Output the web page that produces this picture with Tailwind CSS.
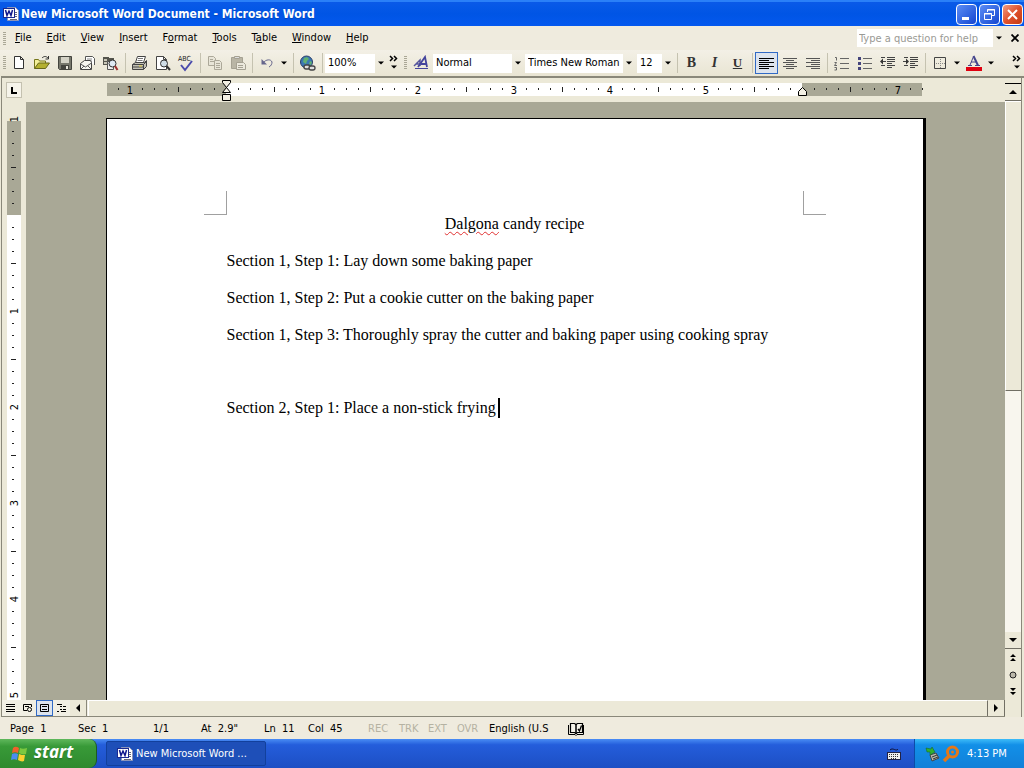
<!DOCTYPE html>
<html lang="en">
<head>
<meta charset="utf-8">
<title>New Microsoft Word Document - Microsoft Word</title>
<script src="https://cdn.jsdelivr.net/npm/@tailwindcss/browser@4"></script>
</head>
<body class="h-screen flex flex-col overflow-hidden bg-[#ece9d8] text-black text-[11px] leading-4 font-['DejaVu_Sans_Condensed','Noto_Sans',sans-serif]">

<svg width="0" height="0" class="absolute" aria-hidden="true">
  <symbol id="word" viewBox="0 0 16 16">
    <path d="M4.500 1.500h8l3 3v10h-11z" fill="#fff" stroke="#8c94b8"/>
    <path d="M12 6.500h2M12 8.500h2M12 10.500h2M7 13.500h7" stroke="#667" fill="none"/>
    <rect x="0.500" y="2.500" width="11" height="9" fill="#fff" stroke="#1a2a90"/>
    <path d="M2.500 4l1.500 5.500 2-4.500 2 4.500L9.500 4" fill="none" stroke="#10188c" stroke-width="1.500"/>
  </symbol>
  <symbol id="down" viewBox="0 0 6 4"><path d="M0 0.500h6l-3 3z"/></symbol>
  <symbol id="more" viewBox="0 0 10 16">
    <path d="M1 1l2.500 2.500L1 6M5 1l2.500 2.500L5 6" fill="none" stroke="#000" stroke-width="1.500"/>
    <path d="M2 10.500h6l-3 3z"/>
  </symbol>
</svg>

<header class="h-[26px] shrink-0 flex items-center bg-linear-to-b from-[#0a5ae8] via-[#0055e5] to-[#0458ee] border-t-2 border-[#2a80f8] pl-[3px] pr-px text-white">
  <svg class="size-4 mr-0.5"><use href="#word"/></svg>
  <h1 class="flex-1 text-[12px] font-bold text-shadow-xs">New Microsoft Word Document - Microsoft Word</h1>
  <div class="flex gap-0.5">
    <button aria-label="Minimize" class="w-[21px] h-[21px] rounded-sm border border-white bg-linear-to-br from-[#5c8df5] to-[#1544d0] flex items-center justify-center"><svg width="15" height="15"><path d="M3 10h7v3H3z" fill="#fff"/></svg></button>
    <button aria-label="Restore" class="w-[21px] h-[21px] rounded-sm border border-white bg-linear-to-br from-[#5c8df5] to-[#1544d0] flex items-center justify-center"><svg width="15" height="15" fill="none" stroke="#fff"><path d="M5.500 5V2.500h7v6H10M5 3h8" /><path d="M2.500 6.500h7v6h-7zM2 7h8"/></svg></button>
    <button aria-label="Close" class="w-[21px] h-[21px] rounded-sm border border-white bg-linear-to-br from-[#f09a80] via-[#e0512c] to-[#c33a10] flex items-center justify-center"><svg width="15" height="15"><path d="M3 3l9 9M12 3l-9 9" stroke="#fff" stroke-width="2"/></svg></button>
  </div>
</header>

<nav class="h-6 shrink-0 flex items-center pl-[3px] bg-[#efebde]">
  <svg width="4" height="14" class="mr-2"><path d="M1.500 1v13" stroke="#aaa796" stroke-width="3" stroke-dasharray="1 1"/></svg>
  <div class="flex gap-[15px]">
    <button><u>F</u>ile</button><button><u>E</u>dit</button><button><u>V</u>iew</button><button><u>I</u>nsert</button><button>F<u>o</u>rmat</button><button><u>T</u>ools</button><button>T<u>a</u>ble</button><button><u>W</u>indow</button><button><u>H</u>elp</button>
  </div>
  <div class="flex-1"></div>
  <input type="text" aria-label="Type a question for help" placeholder="Type a question for help" class="w-[136px] h-[18px] bg-white px-0.5 placeholder:text-[#9a9a94]">
  <button aria-label="Recent questions" class="w-3 flex justify-center"><svg width="6" height="4"><use href="#down"/></svg></button>
  <button aria-label="Close document" class="w-[19px] flex justify-center"><svg width="8" height="8"><path d="M0.500 0.500l7 7M7.500 0.500l-7 7" stroke="#000" stroke-width="1.800"/></svg></button>
</nav>

<div class="h-[26px] shrink-0 flex items-center pl-[3px] bg-linear-to-b from-[#f3f0e6] to-[#e9e5d3] whitespace-nowrap">
  <svg width="4" height="16" class="shrink-0"><path d="M1.500 1v14" stroke="#aaa796" stroke-width="3" stroke-dasharray="1 1"/></svg>
  <button aria-label="New" class="w-[23px] flex justify-center shrink-0"><svg width="16" height="16"><path d="M3.500 1.500h6l3 3v9h-9zM9.500 1.500v3h3" fill="#fff" stroke="#333"/></svg></button>
  <button aria-label="Open" class="w-[23px] flex justify-center shrink-0"><svg width="18" height="16"><path d="M1.500 13.500v-9h4l1 1.500h6v3" fill="#f4f09a" stroke="#76761c"/><path d="M1.500 13.500l4-5.500h11l-4 5.500z" fill="#b4b030" stroke="#66661a"/><path d="M9 3c2-2 4-2 6 0M15.500 1v3h-3" fill="none" stroke="#333"/></svg></button>
  <button aria-label="Save" class="w-[23px] flex justify-center shrink-0"><svg width="16" height="16"><path d="M1.500 1.500h13v13h-12l-1-1z" fill="#77776c" stroke="#44443e"/><path d="M4 2h8v6H4z" fill="#d4d2c6"/><path d="M4 10h8v4H4z" fill="#44443e"/><path d="M9 11h2v3H9z" fill="#e8e6dc"/></svg></button>
  <button aria-label="E-mail" class="w-[23px] flex justify-center shrink-0"><svg width="17" height="16"><path d="M6.500 6V1.500h7l2 2V10" fill="#fff" stroke="#555"/><path d="M8 4h5M8 6h5" stroke="#888"/><path d="M1.500 14.500v-6l4-3h6l1 2v7z" fill="#f6f6f0" stroke="#444"/><path d="M1.500 9l5 3 6-4M2 14l3-3M12 14l-3-3" fill="none" stroke="#555"/></svg></button>
  <button aria-label="Search" class="w-[23px] flex justify-center shrink-0"><svg width="17" height="16"><path d="M1 2h6v1h5v7H1z" fill="#55554e"/><path d="M2 4h3v2H2zM2 7h3v2H2z" fill="#c8c6b8"/><path d="M5.500 6.500h6v8h-6z" fill="#eee" stroke="#555"/><circle cx="10.500" cy="8.500" r="3.500" fill="#dfeaf4" stroke="#333"/><path d="M13 11l2.500 4" stroke="#9c3030" stroke-width="2"/></svg></button>
  <div class="w-1.5 h-5 shrink-0 flex justify-center"><div class="w-px bg-[#c5c2b0]"></div></div>
  <button aria-label="Print" class="w-[23px] flex justify-center shrink-0"><svg width="17" height="16"><path d="M4.500 7.500l2-6h8l-2 6z" fill="#fff" stroke="#444"/><path d="M7 3.500h5M6.500 5.500h5" stroke="#777"/><path d="M1.500 9.500l3-2h9l2-2v6l-3 3h-11z" fill="#c4c2b6" stroke="#444"/><path d="M1.500 9.500h11l3-3M12.500 9.500v5M2 12h10" fill="none" stroke="#444"/><path d="M8 11h3" stroke="#e8d840"/></svg></button>
  <button aria-label="Print Preview" class="w-[23px] flex justify-center shrink-0"><svg width="17" height="16"><path d="M2.500 1.500h7l3 3v10h-10zM9.500 1.500v3h3" fill="#fff" stroke="#444"/><circle cx="10" cy="8.500" r="3.500" fill="#cfdde6" stroke="#333"/><path d="M12.500 11l3.500 4" stroke="#333" stroke-width="2"/></svg></button>
  <button aria-label="Spelling" class="w-[23px] flex justify-center shrink-0"><svg width="18" height="18"><text x="1" y="7" font-size="7" fill="#222">ABC</text><path d="M4 11l4 5 7-9" fill="none" stroke="#4b4bac" stroke-width="2"/></svg></button>
  <div class="w-1.5 h-5 shrink-0 flex justify-center"><div class="w-px bg-[#c5c2b0]"></div></div>
  <button aria-label="Copy" class="w-[23px] flex justify-center shrink-0"><svg width="16" height="16" fill="#e8e5d8" stroke="#aca899"><path d="M1.500 1.500h5l2 2v7h-7z"/><path d="M3 4.500h3M3 6.500h4"/><path d="M7.500 5.500h5l2 2v7h-7z"/><path d="M9 8.500h4M9 10.500h4M9 12.500h4"/></svg></button>
  <button aria-label="Paste" class="w-[23px] flex justify-center shrink-0"><svg width="16" height="16" fill="#b9b5a5" stroke="#a5a192"><path d="M1.500 2.500h11v11h-11z"/><path d="M4.500 1.500h5v2h-5z" fill="#ddd"/><path d="M6.500 7.500h7l2 2v5h-9z" fill="#ebe8dc"/><path d="M8 10.500h5M8 12.500h5"/></svg></button>
  <div class="w-1.5 h-5 shrink-0 flex justify-center"><div class="w-px bg-[#c5c2b0]"></div></div>
  <button aria-label="Undo" class="w-[23px] flex justify-center shrink-0"><svg width="16" height="16"><path d="M4 8c3-4 8-4 9-1 0 2-1 4-3 5" fill="none" stroke="#66668c"/><path d="M2.500 4v5.500h5.500z" fill="#66668c"/></svg></button>
  <button aria-label="Undo list" class="w-3 flex justify-center shrink-0"><svg width="6" height="4"><use href="#down"/></svg></button>
  <div class="w-1.5 h-5 shrink-0 flex justify-center"><div class="w-px bg-[#c5c2b0]"></div></div>
  <button aria-label="Insert Hyperlink" class="w-[23px] flex justify-center shrink-0"><svg width="18" height="17"><circle cx="7.500" cy="7" r="6" fill="#3a78b4" stroke="#2a3c68"/><path d="M5 3l3-1 2 2-2 2-1 3-3-2zM11 6l2 1-1 3-2-1z" fill="#62b070"/><g fill="none" stroke="#444" stroke-width="1.300"><rect x="5" y="10" width="6" height="4" rx="2" fill="#ddd"/><rect x="10" y="11" width="6" height="4" rx="2" fill="#ddd"/></g></svg></button>
  <div class="w-1.5 h-5 shrink-0 flex justify-center"><div class="w-px bg-[#c5c2b0]"></div></div>
  <select aria-label="Zoom" class="appearance-none w-[50px] h-[19px] bg-white pl-[3px] shrink-0"><option>100%</option></select>
  <svg width="6" height="4" class="mx-[3px] shrink-0"><use href="#down"/></svg>
  <button aria-label="More standard buttons" class="w-3.5 flex justify-center shrink-0"><svg width="10" height="16"><use href="#more"/></svg></button>
  <svg width="9" height="16" class="shrink-0"><path d="M4.500 1v14" stroke="#aaa796" stroke-width="3" stroke-dasharray="1 1"/></svg>
  <button aria-label="Styles and Formatting" class="w-[23px] flex justify-center shrink-0"><svg width="17" height="16"><path d="M1 11l6-6v6M3 9h4" fill="none" stroke="#55559c" stroke-width="1.500"/><path d="M5 12l7-10 2 10M8 9h5" fill="none" stroke="#44449c" stroke-width="1.800"/><path d="M2 13.500h13" stroke="#44449c"/></svg></button>
  <select aria-label="Style" class="appearance-none w-[79px] h-[19px] bg-white pl-[3px] shrink-0"><option>Normal</option></select>
  <svg width="6" height="4" class="mx-[3px] shrink-0"><use href="#down"/></svg>
  <select aria-label="Font" class="appearance-none w-[98px] h-[19px] bg-white pl-[3px] ml-px shrink-0"><option>Times New Roman</option></select>
  <svg width="6" height="4" class="mx-[3px] shrink-0"><use href="#down"/></svg>
  <select aria-label="Font size" class="appearance-none w-[25px] h-[19px] bg-white pl-[3px] ml-0.5 shrink-0"><option>12</option></select>
  <svg width="6" height="4" class="mx-[3px] shrink-0"><use href="#down"/></svg>
  <div class="w-1.5 h-5 shrink-0 flex justify-center"><div class="w-px bg-[#c5c2b0]"></div></div>
  <button aria-label="Bold" class="w-[23px] shrink-0 font-['Liberation_Serif',serif] text-[14px] font-bold text-[#333]">B</button>
  <button aria-label="Italic" class="w-[23px] shrink-0 font-['Liberation_Serif',serif] text-[14px] font-bold italic text-[#333]">I</button>
  <button aria-label="Underline" class="w-[23px] shrink-0 font-['Liberation_Serif',serif] text-[13px] font-bold underline text-[#333]">U</button>
  <div class="w-1.5 h-5 shrink-0 flex justify-center"><div class="w-px bg-[#c5c2b0]"></div></div>
  <button aria-label="Align Left" aria-pressed="true" class="w-[23px] h-[22px] border border-[#316ac5] bg-[#dde4ee] flex justify-center items-center shrink-0"><svg width="15" height="13" stroke="#000"><path d="M0 1.500h15M0 3.500h10M0 5.500h15M0 7.500h10M0 9.500h15M0 11.500h10"/></svg></button>
  <button aria-label="Center" class="w-[23px] flex justify-center shrink-0"><svg width="14" height="13" stroke="#555"><path d="M0 1.500h14M3 3.500h8M0 5.500h14M3 7.500h8M0 9.500h14M3 11.500h8"/></svg></button>
  <button aria-label="Align Right" class="w-[23px] flex justify-center shrink-0"><svg width="14" height="13" stroke="#555"><path d="M0 1.500h14M5 3.500h9M0 5.500h14M5 7.500h9M0 9.500h14M5 11.500h9"/></svg></button>
  <div class="w-1.5 h-5 shrink-0 flex justify-center"><div class="w-px bg-[#c5c2b0]"></div></div>
  <button aria-label="Numbering" class="w-[23px] flex justify-center shrink-0"><svg width="16" height="15" stroke="#666"><path d="M6 2.500h9M6 7.500h9M6 12.500h9"/><path d="M1 1.500h1.500v3M0.500 6.500h2l-2 3h2.500M0.500 11.500h2v2.500h-2" fill="none"/></svg></button>
  <button aria-label="Bullets" class="w-[23px] flex justify-center shrink-0"><svg width="16" height="15" stroke="#666"><path d="M6 2.500h9M6 7.500h9M6 12.500h9"/><path d="M1 1h3v3H1zM1 6h3v3H1zM1 11h3v3H1z" fill="#44447c" stroke="none"/></svg></button>
  <button aria-label="Decrease Indent" class="w-[23px] flex justify-center shrink-0"><svg width="17" height="14" stroke="#444"><path d="M2 1.500h4M8 1.500h8M8 3.500h8M8 5.500h8M8 7.500h5M2 9.500h4M8 9.500h8M8 11.500h5M3 5.500h4"/><path d="M1 5.500l3-3v6z" stroke="none" fill="#333"/></svg></button>
  <button aria-label="Increase Indent" class="w-[23px] flex justify-center shrink-0"><svg width="17" height="14" stroke="#444"><path d="M2 1.500h4M8 1.500h8M8 3.500h8M8 5.500h8M8 7.500h5M2 9.500h4M8 9.500h8M8 11.500h5M1 5.500h3"/><path d="M7 5.500l-3-3v6z" stroke="none" fill="#333"/></svg></button>
  <div class="w-1.5 h-5 shrink-0 flex justify-center"><div class="w-px bg-[#c5c2b0]"></div></div>
  <button aria-label="Borders" class="w-[23px] flex justify-center shrink-0"><svg width="14" height="14"><path d="M1.500 1.500h11v11h-11z" fill="none" stroke="#444"/><path d="M7.500 3v9M3 7.500h9" stroke="#888" stroke-dasharray="1 1"/></svg></button>
  <button aria-label="Border list" class="w-[11px] flex justify-center shrink-0"><svg width="6" height="4"><use href="#down"/></svg></button>
  <button aria-label="Font Color" class="w-[23px] flex justify-center shrink-0"><svg width="17" height="17"><path d="M3 10.500h4M10 10.500h5M5 10L8.500 1.500M6 7h6" fill="none" stroke="#44448c"/><path d="M8.500 1L13 10.500" stroke="#44448c" stroke-width="2"/><path d="M1 12h16v4H1z" fill="#e00010"/></svg></button>
  <button aria-label="Font Color list" class="w-[11px] flex justify-center shrink-0"><svg width="6" height="4"><use href="#down"/></svg></button>
  <div class="flex-1"></div>
  <button aria-label="More formatting buttons" class="w-3.5 flex justify-center shrink-0"><svg width="10" height="16"><use href="#more"/></svg></button>
</div>

<main class="flex-1 min-h-0 flex border-t-2 border-[#8a887a] ml-px border-l">
  <div class="flex-1 min-w-0 flex flex-col">
    <div class="h-6 shrink-0 flex">
      <button aria-label="Left tab" class="w-4 h-4 my-1 mx-1 border border-[#c4c1b0] bg-[#f6f4ea] shrink-0"><svg width="14" height="14"><path d="M5 4v6h5" fill="none" stroke="#000" stroke-width="2"/></svg></button>
      <div class="flex-1 min-w-0 flex justify-center overflow-hidden pr-0.5">
        <svg width="816" height="24" class="shrink-0" shape-rendering="crispEdges">
          <defs><pattern id="hticks" x="119" y="0" width="96" height="24" patternUnits="userSpaceOnUse"><path d="M12 10h1v2h-1zM24 10h1v2h-1zM36 10h1v2h-1zM48 9h1v5h-1zM60 10h1v2h-1zM72 10h1v2h-1zM84 10h1v2h-1z" fill="#222"/></pattern></defs>
          <rect y="5" width="815" height="13" fill="#a9a896"/>
          <rect x="119" y="5" width="576" height="13" fill="#fff"/>
          <rect width="816" height="24" fill="url(#hticks)"/>
          <g font-size="11" text-anchor="middle"><text x="23" y="16">1</text><text x="215" y="16">1</text><text x="311" y="16">2</text><text x="407" y="16">3</text><text x="503" y="16">4</text><text x="599" y="16">5</text><text x="791" y="16">7</text></g>
          <g shape-rendering="auto" fill="#f3f0e4" stroke="#000"><path d="M115.500 2.500h8v2l-4 5-4-5zM119.500 9.500l4 5h-8zM115.500 16.500h8v6h-8z"/><path d="M691.500 17.500v-4l4-4 4 4v4z"/></g>
        </svg>
      </div>
    </div>
    <div class="flex-1 min-h-0 flex">
      <div class="w-6 shrink-0 pl-[5px] pt-2.5 overflow-hidden">
        <svg width="14" height="2112" shape-rendering="crispEdges">
          <defs><pattern id="vticks" x="0" y="103" width="14" height="96" patternUnits="userSpaceOnUse"><path d="M5 12h2v1H5zM5 24h2v1H5zM5 36h2v1H5zM4 48h5v1H4zM5 60h2v1H5zM5 72h2v1H5zM5 84h2v1H5z" fill="#222"/></pattern></defs>
          <rect y="9" width="14" height="94" fill="#a9a896"/>
          <rect y="103" width="14" height="2009" fill="#fff"/>
          <rect y="10" width="14" height="2102" fill="url(#vticks)"/>
          <g font-size="11" text-anchor="middle"><text transform="translate(11 7) rotate(-90)">1</text><text transform="translate(11 199) rotate(-90)">1</text><text transform="translate(11 295) rotate(-90)">2</text><text transform="translate(11 391) rotate(-90)">3</text><text transform="translate(11 487) rotate(-90)">4</text><text transform="translate(11 583) rotate(-90)">5</text></g>
        </svg>
      </div>
      <div class="flex-1 min-w-0 flex justify-center overflow-hidden bg-[#a9a896] pt-4">
        <article class="w-[820px] shrink-0 h-[1056px] bg-white border-t border-l border-r-3 border-black px-[97px] pt-[72px]">
          <div class="flex justify-between">
            <div class="w-[23px] h-6 border-r border-b border-[#a0a0a0]"></div>
            <div class="w-[23px] h-6 border-l border-b border-[#a0a0a0]"></div>
          </div>
          <div class="px-[23px] -mt-2.5 font-['Liberation_Serif',serif] text-[16px] leading-[37px]">
            <h2 class="text-center"><span class="underline decoration-wavy decoration-[#e03030] decoration-1 underline-offset-2">Dalgona</span> candy recipe</h2>
            <p>Section 1, Step 1: Lay down some baking paper</p>
            <p>Section 1, Step 2: Put a cookie cutter on the baking paper</p>
            <p>Section 1, Step 3: Thoroughly spray the cutter and baking paper using cooking spray</p>
            <p class="h-9"></p>
            <p class="flex items-center">Section 2, Step 1: Place a non-stick frying<span class="w-0.5 h-5 ml-0.5 bg-black"></span></p>
          </div>
        </article>
      </div>
    </div>
    <div class="h-[17px] shrink-0 flex border-b border-[#8a887a] bg-[#f1efe4]">
      <button aria-label="Normal View" class="w-[17px] flex items-center justify-center"><svg width="9" height="9" stroke="#000"><path d="M0 0.500h9M0 2.500h9M0 5.500h9M0 7.500h9"/></svg></button>
      <button aria-label="Web Layout View" class="w-[17px] flex items-center justify-center"><svg width="10" height="9" fill="none" stroke="#000"><path d="M8.500 3V0.500h-8v6H4M2 2.500h4"/><circle cx="6.500" cy="5.500" r="2"/></svg></button>
      <button aria-label="Print Layout View" aria-pressed="true" class="w-[17px] flex items-center justify-center border border-[#316ac5] bg-[#dde4ee]"><svg width="9" height="9" fill="none" stroke="#000"><path d="M0.500 0.500h8v7h-8zM2 2.500h5M2 5.500h5"/></svg></button>
      <button aria-label="Outline View" class="w-[17px] flex items-center justify-center"><svg width="10" height="9" stroke="#000"><path d="M0 0.500h5M3 2.500h2M6 2.500h3M3 5.500h2M6 5.500h3M0 7.500h2M4 7.500h5"/></svg></button>
      <button aria-label="Scroll left" class="w-[17px] flex items-center justify-center border-r border-[#8a887a] bg-[#ece9d8]"><svg width="4" height="8"><path d="M4 0v8L0 4z"/></svg></button>
      <div class="flex-1 ml-px border-t border-l border-t-white border-l-white border-r border-r-[#716f64] bg-[#ece9d8]"></div>
      <button aria-label="Scroll right" class="w-[17px] flex items-center justify-center border-r border-[#716f64] bg-[#ece9d8]"><svg width="4" height="8"><path d="M0 0v8l4-4z"/></svg></button>
    </div>
  </div>
  <div class="w-[17px] mr-0.5 shrink-0 flex flex-col border-r border-[#8a887a] bg-[#f8f6ee]">
    <div class="h-[6px] shrink-0 bg-[#ece9d8] border-b border-black"></div>
    <button aria-label="Scroll up" class="h-[17px] shrink-0 flex items-center justify-center bg-[#ece9d8] border-b border-[#716f64]"><svg width="8" height="4"><path d="M0 4h8L4 0z"/></svg></button>
    <div class="h-[290px] shrink-0 bg-[#ece9d8] border-t border-l border-t-white border-l-white border-b border-b-[#716f64]"></div>
    <div class="flex-1"></div>
    <button aria-label="Scroll down" class="h-[17px] shrink-0 flex items-center justify-center bg-[#ece9d8] border-b border-[#716f64]"><svg width="8" height="4"><path d="M0 0h8L4 4z"/></svg></button>
    <button aria-label="Previous Page" class="h-[17px] shrink-0 flex items-center justify-center bg-[#ece9d8]"><svg width="6" height="7"><path d="M0 3h6L3 0zM0 7h6L3 4z"/></svg></button>
    <button aria-label="Select Browse Object" class="h-[17px] shrink-0 flex items-center justify-center bg-[#ece9d8]"><svg width="8" height="8"><circle cx="4" cy="4" r="3" fill="#bbb8aa" stroke="#222"/></svg></button>
    <button aria-label="Next Page" class="h-[17px] shrink-0 flex items-center justify-center bg-[#ece9d8]"><svg width="6" height="7"><path d="M0 0h6L3 3zM0 4h6L3 7z"/></svg></button>
    <div class="h-[17px] shrink-0 bg-[#ece9d8]"></div>
  </div>
</main>

<footer class="h-[22px] shrink-0 flex items-center pt-0.5 pl-2.5 bg-[#efebde] whitespace-nowrap">
  <span class="w-[68px]">Page&nbsp; 1</span><span class="w-[75px]">Sec&nbsp; 1</span><span class="w-[48px]">1/1</span><span class="w-[63px]">At&nbsp; 2.9"</span><span class="w-[44px]">Ln&nbsp; 11</span><span class="w-[60px]">Col&nbsp; 45</span>
  <span class="w-[31px] text-[#b5b2a2]">REC</span><span class="w-[29px] text-[#b5b2a2]">TRK</span><span class="w-[29px] text-[#b5b2a2]">EXT</span><span class="w-[32px] text-[#b5b2a2]">OVR</span>
  <span class="w-[78px]">English (U.S</span>
  <svg width="18" height="14" fill="#f6f4ea" stroke="#000"><path d="M1.500 3v9.500h6.500l1 1 1-1h6.500V3" fill="none"/><path d="M3.500 1.500h4l1.500 1 1.500-1h5v9h-5l-1.500 1-1.500-1h-4z" stroke-width="1.200"/><path d="M9 2v10" stroke-width="1.500"/><path d="M11 7l1.500 2 2-5.500" fill="none" stroke-width="1.300"/></svg>
</footer>

<div class="h-[29px] shrink-0 flex items-stretch bg-linear-to-b from-[#4a8cf4] via-[#245ddb] via-20% to-[#1d4fc4] text-white">
  <button class="w-[97px] flex items-center pl-2.5 gap-1.5 rounded-r-lg bg-linear-to-b from-[#5fb85c] via-[#389a38] via-25% to-[#2f8a2e] border-r border-[#1d5c20] text-[17px] font-bold italic font-['Open_Sans','Noto_Sans',sans-serif] text-shadow-sm">
    <svg width="18" height="18"><path d="M3 3c2-2 4-1 6 0L8 8C6 7 4 7 2 8z" fill="#f0602c"/><path d="M10 3c2 1 4 1 7 0l-1 6c-3 1-5 0-7-1z" fill="#7cc840"/><path d="M2 9c2-1 4-1 6 0l-1 6c-2-1-4-1-6 0z" fill="#4c8cf0"/><path d="M9 9c2 1 4 1 6 1l-1 6c-2 1-4 0-6-1z" fill="#fcd030"/></svg>
    <span class="-mt-1">start</span>
  </button>
  <button class="w-40 ml-[9px] my-0.5 rounded-xs flex items-center pl-2.5 gap-[3px] border border-[#12409c] bg-[#1e4fb8]">
    <svg class="size-4"><use href="#word"/></svg><span>New Microsoft Word ...</span>
  </button>
  <div class="flex-1"></div>
  <div class="flex items-center mr-[13px]"><svg width="14" height="14"><path d="M3 3c3-3 6 2 8-1" fill="none" stroke="#113"/><rect x="0.500" y="5.500" width="13" height="7" fill="#eee" stroke="#224"/><path d="M2 7.500h10M2 9.500h10M4 11.500h6" stroke="#333" stroke-dasharray="1 1"/></svg></div>
  <div class="w-[110px] flex items-center pl-2.5 bg-linear-to-b from-[#3cbcf8] via-[#1290e8] via-20% to-[#1280d8] border-l border-[#0c4ca8]">
    <svg width="16" height="16"><path d="M5 9l6-2 3 5-7 3z" fill="#b8b8a8" stroke="#444"/><path d="M7 11l5-2M8 13l5-2" stroke="#333"/><path d="M1 2l5 1 1-2 3 5-5 3V6L2 6z" fill="#30b030" stroke="#186018" stroke-width="0.500"/></svg>
    <svg width="18" height="18" class="ml-px"><circle cx="10.500" cy="7" r="5" fill="none" stroke="#e47818" stroke-width="3"/><circle cx="10.500" cy="7" r="1.500" fill="#e47818"/><path d="M7 11l-5 5" stroke="#e47818" stroke-width="3.500"/></svg>
    <span class="ml-[7px]">4:13 PM</span>
  </div>
</div>
</body>
</html>
